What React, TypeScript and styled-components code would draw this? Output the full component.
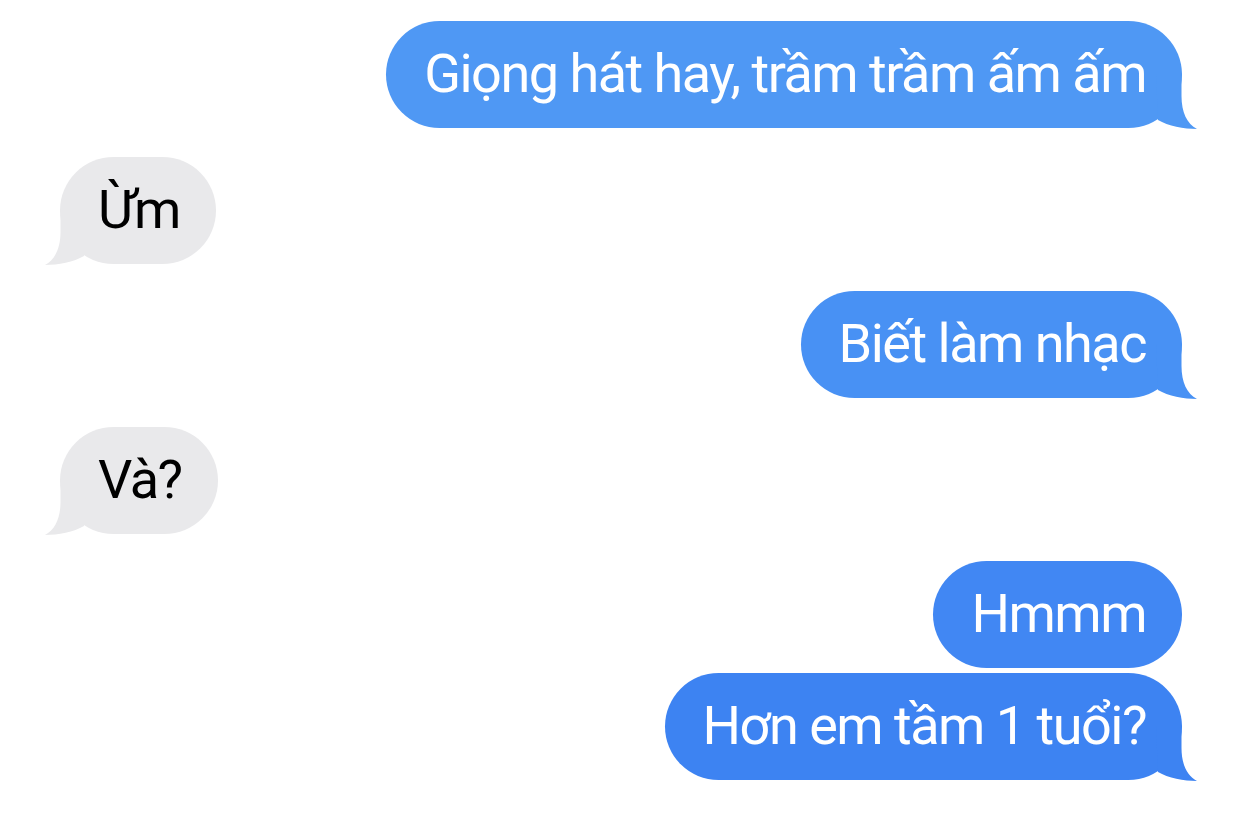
import React from "react";
import styled, { createGlobalStyle } from "styled-components";

const Global = createGlobalStyle`
  html, body { margin: 0; padding: 0; background: #ffffff; }
  body { font-family: Roboto, "Noto Sans", sans-serif; -webkit-font-smoothing: antialiased; }
`;

const Thread = styled.div`
  width: 1242px;
  height: 832px;
  box-sizing: border-box;
  padding: 21px 60px 0 60px;
  display: flex;
  flex-direction: column;
  background: #ffffff;
`;

const Row = styled.div<{ $mine: boolean; $gap: number }>`
  display: flex;
  justify-content: ${(p) => (p.$mine ? "flex-end" : "flex-start")};
  margin-top: ${(p) => p.$gap}px;
`;

const Bubble = styled.div<{ $mine: boolean; $bg: string }>`
  position: relative;
  box-sizing: border-box;
  height: 107px;
  padding: 0 36px 2px 38px;
  display: flex;
  align-items: center;
  border-radius: 54px;
  background: ${(p) => p.$bg};
  color: ${(p) => (p.$mine ? "#ffffff" : "#000000")};
  font-size: 54px;
  line-height: 67px;
  letter-spacing: -1.5px;
  white-space: nowrap;
`;

const Tail = styled.svg<{ $mine: boolean }>`
  position: absolute;
  bottom: -2px;
  width: 42px;
  height: 60px;
  overflow: visible;
  ${(p) => (p.$mine ? "right: -16px;" : "left: -16px; transform: scaleX(-1);")}
`;

type Msg = { text: string; mine: boolean; gap: number; bg: string; tail: boolean };

const messages: Msg[] = [
  { text: "Giọng hát hay, trầm trầm ấm ấm", mine: true, gap: 0, bg: "#4f98f4", tail: true },
  { text: "Ừm", mine: false, gap: 29, bg: "#e9e9eb", tail: true },
  { text: "Biết làm nhạc", mine: true, gap: 27, bg: "#4891f4", tail: true },
  { text: "Và?", mine: false, gap: 29, bg: "#e9e9eb", tail: true },
  { text: "Hmmm", mine: true, gap: 27, bg: "#4187f3", tail: false },
  { text: "Hơn em tầm 1 tuổi?", mine: true, gap: 5, bg: "#3d83f2", tail: true },
];

function BubbleTail({ mine, color }: { mine: boolean; color: string }) {
  // local box 42x60; bubble bottom corner at (26, 58), tip at (41, 59)
  return (
    <Tail $mine={mine} viewBox="0 0 42 60" aria-hidden>
      <path
        d="M0 4 L25.5 4 L25.5 26 C25.5 42 31 54 41 59 C28 59 12 56 2 50 Z"
        fill={color}
      />
    </Tail>
  );
}

export default function App() {
  return (
    <>
      <Global />
      <Thread>
        {messages.map((m, i) => (
          <Row key={i} $mine={m.mine} $gap={m.gap}>
            <Bubble $mine={m.mine} $bg={m.bg}>
              {m.tail && <BubbleTail mine={m.mine} color={m.bg} />}
              {m.text}
            </Bubble>
          </Row>
        ))}
      </Thread>
    </>
  );
}
